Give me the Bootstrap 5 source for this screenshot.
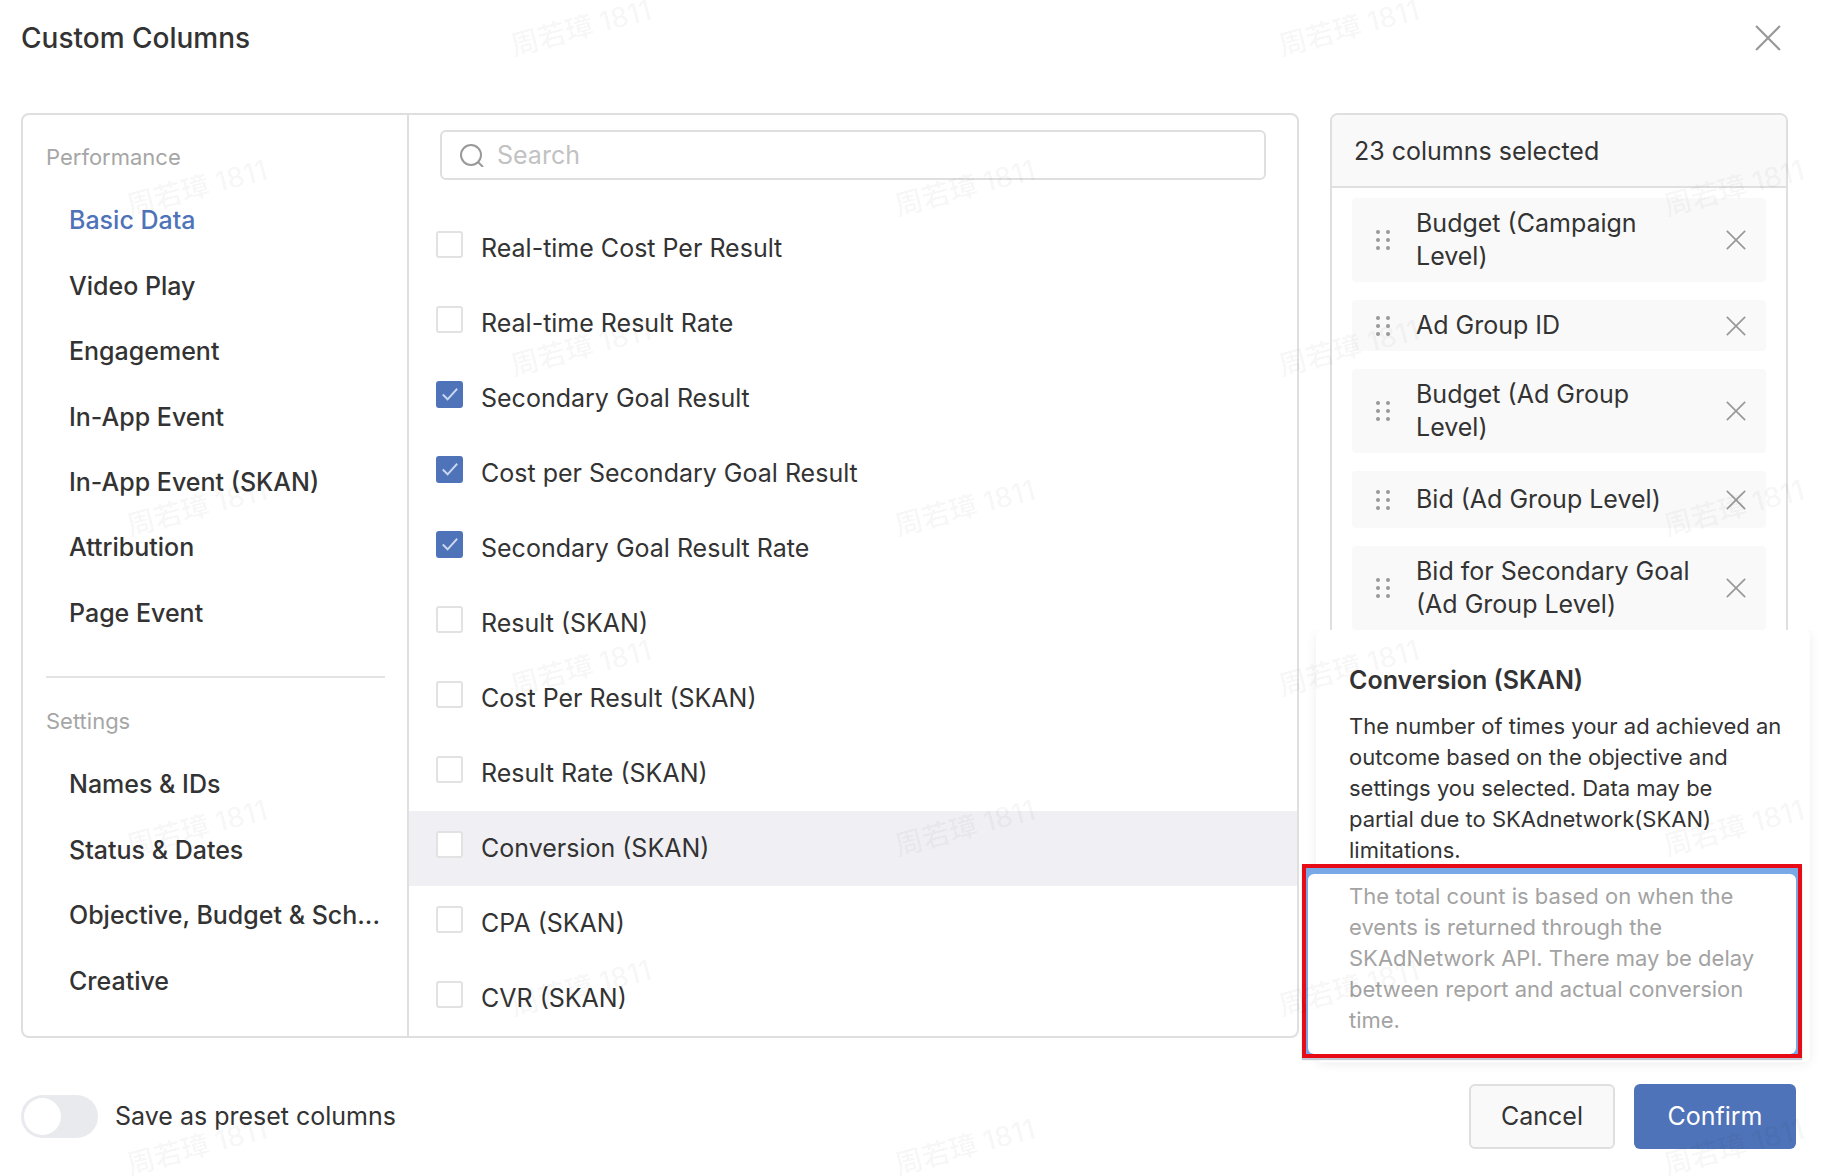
<!DOCTYPE html>
<html lang="en">
<head>
<meta charset="utf-8">
<meta name="viewport" content="width=device-width, initial-scale=1">
<title>Custom Columns</title>
<link href="https://cdn.jsdelivr.net/npm/bootstrap@5.3.0/dist/css/bootstrap.min.css" rel="stylesheet">
<style>
  :root { --ink: #333; --line: #dfdfdf; --brand: #4f73b8; --muted: #a6a6a6; }
  body { font-family: Inter, "Liberation Sans", "Noto Sans CJK SC", sans-serif; font-size: 25px; line-height: 33px; color: var(--ink); background: #fff; }
  .dialog { padding: 20px 26px 26px 21px; min-height: 100vh; position: relative; overflow: hidden; }
  .dialog-title { font-size: 28px; line-height: 36px; font-weight: 500; margin: 0; }
  .plain-btn { border: 0; background: none; padding: 0; line-height: 0; }
  .icon { fill: none; stroke: #999; stroke-width: 2; display: block; }
  .dialog-head { padding-right: 15px; margin-bottom: 57px; }
  .panels { gap: 31px; padding-right: 8px; }
  .pane { border: 2px solid var(--line); border-radius: 8px; }
  .side { flex: 0 0 386px; border-right: 2px solid var(--line); padding: 19px 22px 22px 23px; }
  .side-label { font-size: 22px; line-height: 46px; color: var(--muted); margin: 0 0 8px; font-weight: 400; }
  .side-link { flex: 1 1 0; min-height: 40px; padding-left: 23px; font-weight: 500; color: var(--ink); text-decoration: none; display: flex; align-items: center; }
  .side-link.active { color: var(--brand); }
  .side-rule { border: 0; border-top: 2px solid #e3e3e3; opacity: 1; margin: 30px 0 20px; }
  .search-box { margin: 15px 31px 31px; height: 50px; border: 2px solid var(--line); border-radius: 6px; padding: 0 18px; gap: 13px; }
  .search-box input { border: 0; outline: 0; background: none; line-height: 30px; padding: 0; color: var(--ink); }
  .search-box input::placeholder { color: #c2c2c2; opacity: 1; }
  .metric { height: 75px; padding-left: 27px; gap: 18px; }
  .metric.hovered { background: #f0f0f4; }
  .metric .form-check-input { width: 27px; height: 27px; margin: 0 0 8px; border: 2px solid #e2e2e2; border-radius: 3px; flex: none; background-color: #fff; }
  .metric .form-check-input:checked { background-color: var(--brand); border-color: var(--brand);
    background-image: url("data:image/svg+xml,%3csvg xmlns='http://www.w3.org/2000/svg' viewBox='0 0 24 24'%3e%3cpath fill='none' stroke='%23c9d6f0' stroke-width='2' d='M5 12l5 5 10-11'/%3e%3c/svg%3e"); }
  .picked { flex: 0 0 458px; }
  .picked-head { height: 73px; background: #f9f9f9; border-bottom: 2px solid var(--line); border-radius: 6px 6px 0 0; padding: 2px 22px 0; }
  .picked-list { gap: 18px; padding: 10px 20px; overflow: hidden; height: 0; }
  .picked-item { background: #f9f9f9; border-radius: 4px; padding: 9px 20px 9px 24px; flex: none; }
  .picked-item.roomy { padding-top: 12px; padding-bottom: 12px; }
  .picked-name { padding: 0 30px 0 26px; }
  .grip { fill: #999; display: block; flex: none; }
  .dialog-foot { padding-top: 46px; }
  .foot-actions { gap: 19px; }
  .preset { gap: 17px; }
  .preset .form-check-input { width: 77px; height: 43px; margin: 0; border: 0; border-radius: 22px; background-color: #e8eaee; background-size: 43px 43px;
    background-image: url("data:image/svg+xml,%3csvg xmlns='http://www.w3.org/2000/svg' viewBox='0 0 43 43'%3e%3ccircle cx='21.5' cy='21.5' r='18.5' fill='%23fff'/%3e%3c/svg%3e"); }
  .foot-btn { height: 65px; border-radius: 6px; font-size: 25px; border: 2px solid transparent; }
  .btn-cancel { width: 146px; border-color: var(--line); background: #f9f9f9; color: var(--ink); }
  .btn-confirm { width: 162px; background: var(--brand); color: #fff; }
  .hint { position: absolute; top: 630px; right: 12px; width: 494px; height: 432px; background: #fff; border-radius: 6px; box-shadow: 0 2px 12px rgba(0,0,0,.07); clip-path: inset(0 -12px -16px -12px); padding: 32px 16px 0 33px; }
  .hint-title { font-size: 25px; line-height: 36px; font-weight: 600; margin: 0 0 13px; }
  .hint-text { font-size: 22px; line-height: 31px; margin: 0; }
  .hint-note { color: #a3a3a3; background: #fff; border-radius: 6px; height: 100%; padding: 7px 20px 0 41px; }
  .callout { position: absolute; top: 864px; right: 20px; width: 500px; height: 194px; border: 4px solid #e60b15; background: #78a8e6; box-shadow: 0 2px 1px #c3cad6; padding: 6px 2px 0; }
  .watermark { position: absolute; inset: 0; width: 100%; height: 100%; pointer-events: none; fill: #000; fill-opacity: .05; font-family: Inter, "Noto Sans CJK SC", sans-serif; font-size: 28px; font-weight: 500; }
</style>
</head>
<body>
<svg width="0" height="0" class="position-absolute" aria-hidden="true">
  <symbol id="cross" viewBox="0 0 24 24"><path d="M1 1l22 22M23 1L1 23"/></symbol>
  <symbol id="dots" viewBox="0 0 14 22"><circle cx="2" cy="3" r="2"/><circle cx="12" cy="3" r="2"/><circle cx="2" cy="11" r="2"/><circle cx="12" cy="11" r="2"/><circle cx="2" cy="19" r="2"/><circle cx="12" cy="19" r="2"/></symbol>
</svg>
<main class="dialog d-flex flex-column">
  <header class="dialog-head d-flex justify-content-between align-items-center">
    <h1 class="dialog-title">Custom Columns</h1>
    <button class="plain-btn" type="button" aria-label="Close"><svg class="icon" width="26" height="26"><use href="#cross"/></svg></button>
  </header>

  <div class="panels d-flex">
    <section class="pane d-flex flex-fill">
      <nav class="side d-flex flex-column">
        <h2 class="side-label">Performance</h2>
        <a class="side-link active" href="#">Basic Data</a>
        <a class="side-link" href="#">Video Play</a>
        <a class="side-link" href="#">Engagement</a>
        <a class="side-link" href="#">In-App Event</a>
        <a class="side-link" href="#">In-App Event (SKAN)</a>
        <a class="side-link" href="#">Attribution</a>
        <a class="side-link" href="#">Page Event</a>
        <hr class="side-rule">
        <h2 class="side-label">Settings</h2>
        <a class="side-link" href="#">Names &amp; IDs</a>
        <a class="side-link" href="#">Status &amp; Dates</a>
        <a class="side-link text-nowrap" href="#">Objective, Budget &amp; Sch...</a>
        <a class="side-link" href="#">Creative</a>
      </nav>
      <div class="flex-fill">
        <div class="search-box d-flex align-items-center">
          <svg class="icon" width="24" height="24" viewBox="0 0 24 24"><circle cx="11" cy="12" r="10"/><path d="M18 19l5 5"/></svg>
          <input class="flex-fill" type="search" placeholder="Search" aria-label="Search">
        </div>
        <label class="metric d-flex align-items-center"><input class="form-check-input" type="checkbox"><span>Real-time Cost Per Result</span></label>
        <label class="metric d-flex align-items-center"><input class="form-check-input" type="checkbox"><span>Real-time Result Rate</span></label>
        <label class="metric d-flex align-items-center"><input class="form-check-input" type="checkbox" checked><span>Secondary Goal Result</span></label>
        <label class="metric d-flex align-items-center"><input class="form-check-input" type="checkbox" checked><span>Cost per Secondary Goal Result</span></label>
        <label class="metric d-flex align-items-center"><input class="form-check-input" type="checkbox" checked><span>Secondary Goal Result Rate</span></label>
        <label class="metric d-flex align-items-center"><input class="form-check-input" type="checkbox"><span>Result (SKAN)</span></label>
        <label class="metric d-flex align-items-center"><input class="form-check-input" type="checkbox"><span>Cost Per Result (SKAN)</span></label>
        <label class="metric d-flex align-items-center"><input class="form-check-input" type="checkbox"><span>Result Rate (SKAN)</span></label>
        <label class="metric hovered d-flex align-items-center"><input class="form-check-input" type="checkbox"><span>Conversion (SKAN)</span></label>
        <label class="metric d-flex align-items-center"><input class="form-check-input" type="checkbox"><span>CPA (SKAN)</span></label>
        <label class="metric d-flex align-items-center"><input class="form-check-input" type="checkbox"><span>CVR (SKAN)</span></label>
      </div>
    </section>

    <section class="pane picked d-flex flex-column">
      <div class="picked-head d-flex align-items-center">23 columns selected</div>
      <div class="picked-list d-flex flex-column flex-fill">
        <div class="picked-item d-flex align-items-center"><svg class="grip" width="14" height="22"><use href="#dots"/></svg><span class="picked-name flex-fill">Budget (Campaign Level)</span><button class="plain-btn" type="button" aria-label="Remove"><svg class="icon" width="20" height="20"><use href="#cross"/></svg></button></div>
        <div class="picked-item d-flex align-items-center"><svg class="grip" width="14" height="22"><use href="#dots"/></svg><span class="picked-name flex-fill">Ad Group ID</span><button class="plain-btn" type="button" aria-label="Remove"><svg class="icon" width="20" height="20"><use href="#cross"/></svg></button></div>
        <div class="picked-item d-flex align-items-center"><svg class="grip" width="14" height="22"><use href="#dots"/></svg><span class="picked-name flex-fill">Budget (Ad Group Level)</span><button class="plain-btn" type="button" aria-label="Remove"><svg class="icon" width="20" height="20"><use href="#cross"/></svg></button></div>
        <div class="picked-item roomy d-flex align-items-center"><svg class="grip" width="14" height="22"><use href="#dots"/></svg><span class="picked-name flex-fill">Bid (Ad Group Level)</span><button class="plain-btn" type="button" aria-label="Remove"><svg class="icon" width="20" height="20"><use href="#cross"/></svg></button></div>
        <div class="picked-item d-flex align-items-center"><svg class="grip" width="14" height="22"><use href="#dots"/></svg><span class="picked-name flex-fill">Bid for Secondary Goal (Ad Group Level)</span><button class="plain-btn" type="button" aria-label="Remove"><svg class="icon" width="20" height="20"><use href="#cross"/></svg></button></div>
      </div>
    </section>
  </div>

  <footer class="dialog-foot d-flex justify-content-between align-items-center">
    <label class="preset form-switch d-flex align-items-center p-0 m-0"><input class="form-check-input" type="checkbox" role="switch"><span>Save as preset columns</span></label>
    <div class="foot-actions d-flex">
      <button class="btn foot-btn btn-cancel" type="button">Cancel</button>
      <button class="btn foot-btn btn-confirm" type="button">Confirm</button>
    </div>
  </footer>

  <aside class="hint" role="tooltip">
    <h2 class="hint-title">Conversion (SKAN)</h2>
    <p class="hint-text">The number of times your ad achieved an outcome based on the objective and settings you selected. Data may be<br>partial due to SKAdnetwork(SKAN) limitations.</p>
  </aside>
  <div class="callout">
    <p class="hint-text hint-note">The total count is based on when the events is returned through the SKAdNetwork API. There may be delay between report and actual conversion time.</p>
  </div>

  <svg class="watermark" aria-hidden="true">
    <g>
      <text transform="translate(514 56) rotate(-15)">周若璋 1811</text><text transform="translate(1282 56) rotate(-15)">周若璋 1811</text>
      <text transform="translate(130 216) rotate(-15)">周若璋 1811</text><text transform="translate(898 216) rotate(-15)">周若璋 1811</text><text transform="translate(1667 216) rotate(-15)">周若璋 1811</text>
      <text transform="translate(514 376) rotate(-15)">周若璋 1811</text><text transform="translate(1282 376) rotate(-15)">周若璋 1811</text>
      <text transform="translate(130 536) rotate(-15)">周若璋 1811</text><text transform="translate(898 536) rotate(-15)">周若璋 1811</text><text transform="translate(1667 536) rotate(-15)">周若璋 1811</text>
      <text transform="translate(514 696) rotate(-15)">周若璋 1811</text><text transform="translate(1282 696) rotate(-15)">周若璋 1811</text>
      <text transform="translate(130 856) rotate(-15)">周若璋 1811</text><text transform="translate(898 856) rotate(-15)">周若璋 1811</text><text transform="translate(1667 856) rotate(-15)">周若璋 1811</text>
      <text transform="translate(514 1016) rotate(-15)">周若璋 1811</text><text transform="translate(1282 1016) rotate(-15)">周若璋 1811</text>
      <text transform="translate(130 1175) rotate(-15)">周若璋 1811</text><text transform="translate(898 1175) rotate(-15)">周若璋 1811</text><text transform="translate(1667 1175) rotate(-15)">周若璋 1811</text>
    </g>
  </svg>
</main>
<script src="https://cdn.jsdelivr.net/npm/bootstrap@5.3.0/dist/js/bootstrap.bundle.min.js"></script>
</body>
</html>
